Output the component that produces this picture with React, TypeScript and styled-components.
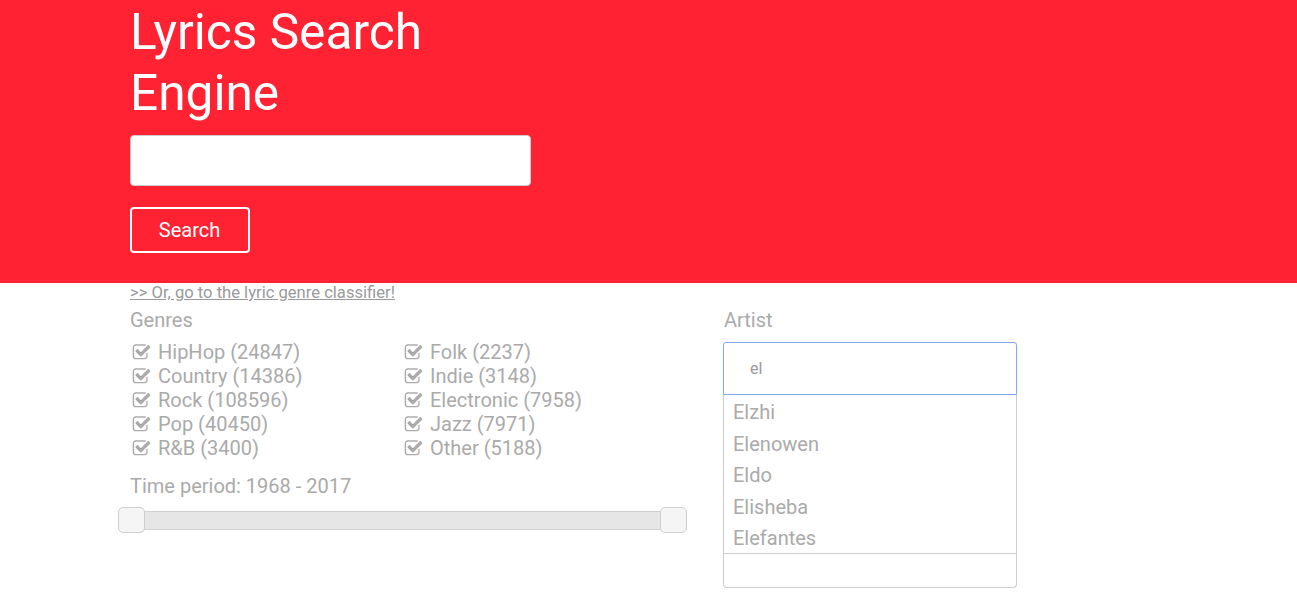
import React from "react";
import styled, { createGlobalStyle } from "styled-components";

const GlobalStyle = createGlobalStyle`
  html, body { margin: 0; padding: 0; background: #fff; }
  body { font-family: Roboto, "Liberation Sans", Arial, sans-serif; }
  * { box-sizing: border-box; }
`;

const Header = styled.header`
  background: #fe2232;
  height: 283px;
  padding: 2px 0 0 130px;
`;

const Title = styled.h1`
  margin: 0;
  width: 400px;
  font-weight: 400;
  font-size: 49.6px;
  line-height: 61px;
  color: #fff;
`;

const SearchInput = styled.input`
  display: block;
  margin-top: 11px;
  width: 401px;
  height: 51px;
  border: 1px solid #ccc;
  border-radius: 4px;
  background: #fff;
  outline: none;
  font-family: inherit;
  font-size: 16px;
  padding: 0 12px;
`;

const SearchButton = styled.button`
  display: block;
  margin-top: 21px;
  width: 120px;
  height: 46px;
  border: 2px solid #fff;
  border-radius: 4px;
  background: transparent;
  color: #fff;
  font-family: inherit;
  font-size: 20px;
  padding: 0 1px 0 0;
`;

const Main = styled.main`
  padding: 0 0 0 130px;
`;

const ClassifierLink = styled.a`
  display: block;
  margin-top: 1px;
  font-size: 16.6px;
  line-height: 18px;
  color: #9a9a9a;
  text-decoration: underline;
`;

const Columns = styled.div`
  display: flex;
  gap: 36px;
  margin-top: 7px;
`;

const LeftCol = styled.div`
  width: 557px;
`;

const RightCol = styled.div`
  width: 294px;
`;

const Label = styled.div<{ $indent?: number }>`
  font-size: 20px;
  line-height: 22px;
  color: #aaa;
  margin-left: ${(p) => p.$indent ?? 0}px;
`;

const GenreGrid = styled.div`
  display: grid;
  grid-template-columns: 272px 272px;
  grid-auto-flow: column;
  grid-template-rows: repeat(5, 24px);
  margin-top: 9px;
`;

const GenreItem = styled.label`
  display: flex;
  align-items: center;
  gap: 7px;
  padding-left: 2px;
  font-size: 20px;
  line-height: 24px;
  color: #aaa;
`;

const CheckIcon = styled.svg`
  width: 19px;
  height: 19px;
  fill: #aaa;
  flex: none;
`;

const TimeLabel = styled(Label)`
  margin-top: 15px;
`;

const Slider = styled.div`
  position: relative;
  margin: 10px 0 0 -12px;
  width: 569px;
  height: 26px;
  display: flex;
  align-items: center;
`;

const Track = styled.div`
  flex: 1;
  height: 19px;
  background: #e6e6e6;
  border: 1px solid #cfcfcf;
  border-radius: 2px;
`;

const Handle = styled.div<{ $side: "left" | "right" }>`
  position: absolute;
  top: 0;
  ${(p) => (p.$side === "left" ? "left: 0;" : "right: 0;")}
  width: 27px;
  height: 26px;
  background: #f5f5f5;
  border: 1px solid #cfcfcf;
  border-radius: 5px;
`;

const ArtistBox = styled.div`
  margin-top: 11px;
`;

const ArtistInput = styled.div`
  height: 53px;
  border: 1px solid #82a8ef;
  border-radius: 3px 3px 0 0;
  display: flex;
  align-items: center;
  padding-left: 26px;
  font-size: 16px;
  color: #999;
`;

const Dropdown = styled.div`
  border: 1px solid #ccc;
  border-top: none;
  border-radius: 0 0 4px 4px;
`;

const List = styled.ul`
  list-style: none;
  margin: 0;
  padding: 2px 0 0;
  height: 159px;
  border-bottom: 1px solid #ccc;
  overflow: hidden;
`;

const ListItem = styled.li`
  padding-left: 9px;
  font-size: 20px;
  line-height: 31.5px;
  color: #aaa;
`;

const DropFooter = styled.div`
  height: 33px;
`;

const CheckSquare = () => (
  <CheckIcon viewBox="0 0 1792 1792">
    <path d="M1472 930v318q0 119-84.5 203.5t-203.5 84.5h-832q-119 0-203.5-84.5t-84.5-203.5v-832q0-119 84.5-203.5t203.5-84.5h832q63 0 117 25 15 7 18 23 3 17-9 29l-49 49q-10 10-23 10-3 0-9-2-23-6-45-6h-832q-66 0-113 47t-47 113v832q0 66 47 113t113 47h832q66 0 113-47t47-113v-254q0-13 9-22l64-64q10-10 23-10 6 0 12 3 20 8 20 29zm231-489l-814 814q-24 24-57 24t-57-24l-430-430q-24-24-24-57t24-57l110-110q24-24 57-24t57 24l263 263 647-647q24-24 57-24t57 24l110 110q24 24 24 57t-24 57z" />
  </CheckIcon>
);

const genres = [
  "HipHop (24847)",
  "Country (14386)",
  "Rock (108596)",
  "Pop (40450)",
  "R&B (3400)",
  "Folk (2237)",
  "Indie (3148)",
  "Electronic (7958)",
  "Jazz (7971)",
  "Other (5188)",
];

const artists = ["Elzhi", "Elenowen", "Eldo", "Elisheba", "Elefantes"];

export default function App() {
  return (
    <>
      <GlobalStyle />
      <Header>
        <Title>Lyrics Search Engine</Title>
        <SearchInput type="text" />
        <SearchButton>Search</SearchButton>
      </Header>
      <Main>
        <ClassifierLink href="#">&gt;&gt; Or, go to the lyric genre classifier!</ClassifierLink>
        <Columns>
          <LeftCol>
            <Label>Genres</Label>
            <GenreGrid>
              {genres.map((g) => (
                <GenreItem key={g}>
                  <CheckSquare />
                  {g}
                </GenreItem>
              ))}
            </GenreGrid>
            <TimeLabel>Time period: 1968 - 2017</TimeLabel>
            <Slider>
              <Track />
              <Handle $side="left" />
              <Handle $side="right" />
            </Slider>
          </LeftCol>
          <RightCol>
            <Label $indent={1}>Artist</Label>
            <ArtistBox>
              <ArtistInput>el</ArtistInput>
              <Dropdown>
                <List>
                  {artists.map((a) => (
                    <ListItem key={a}>{a}</ListItem>
                  ))}
                </List>
                <DropFooter />
              </Dropdown>
            </ArtistBox>
          </RightCol>
        </Columns>
      </Main>
    </>
  );
}
